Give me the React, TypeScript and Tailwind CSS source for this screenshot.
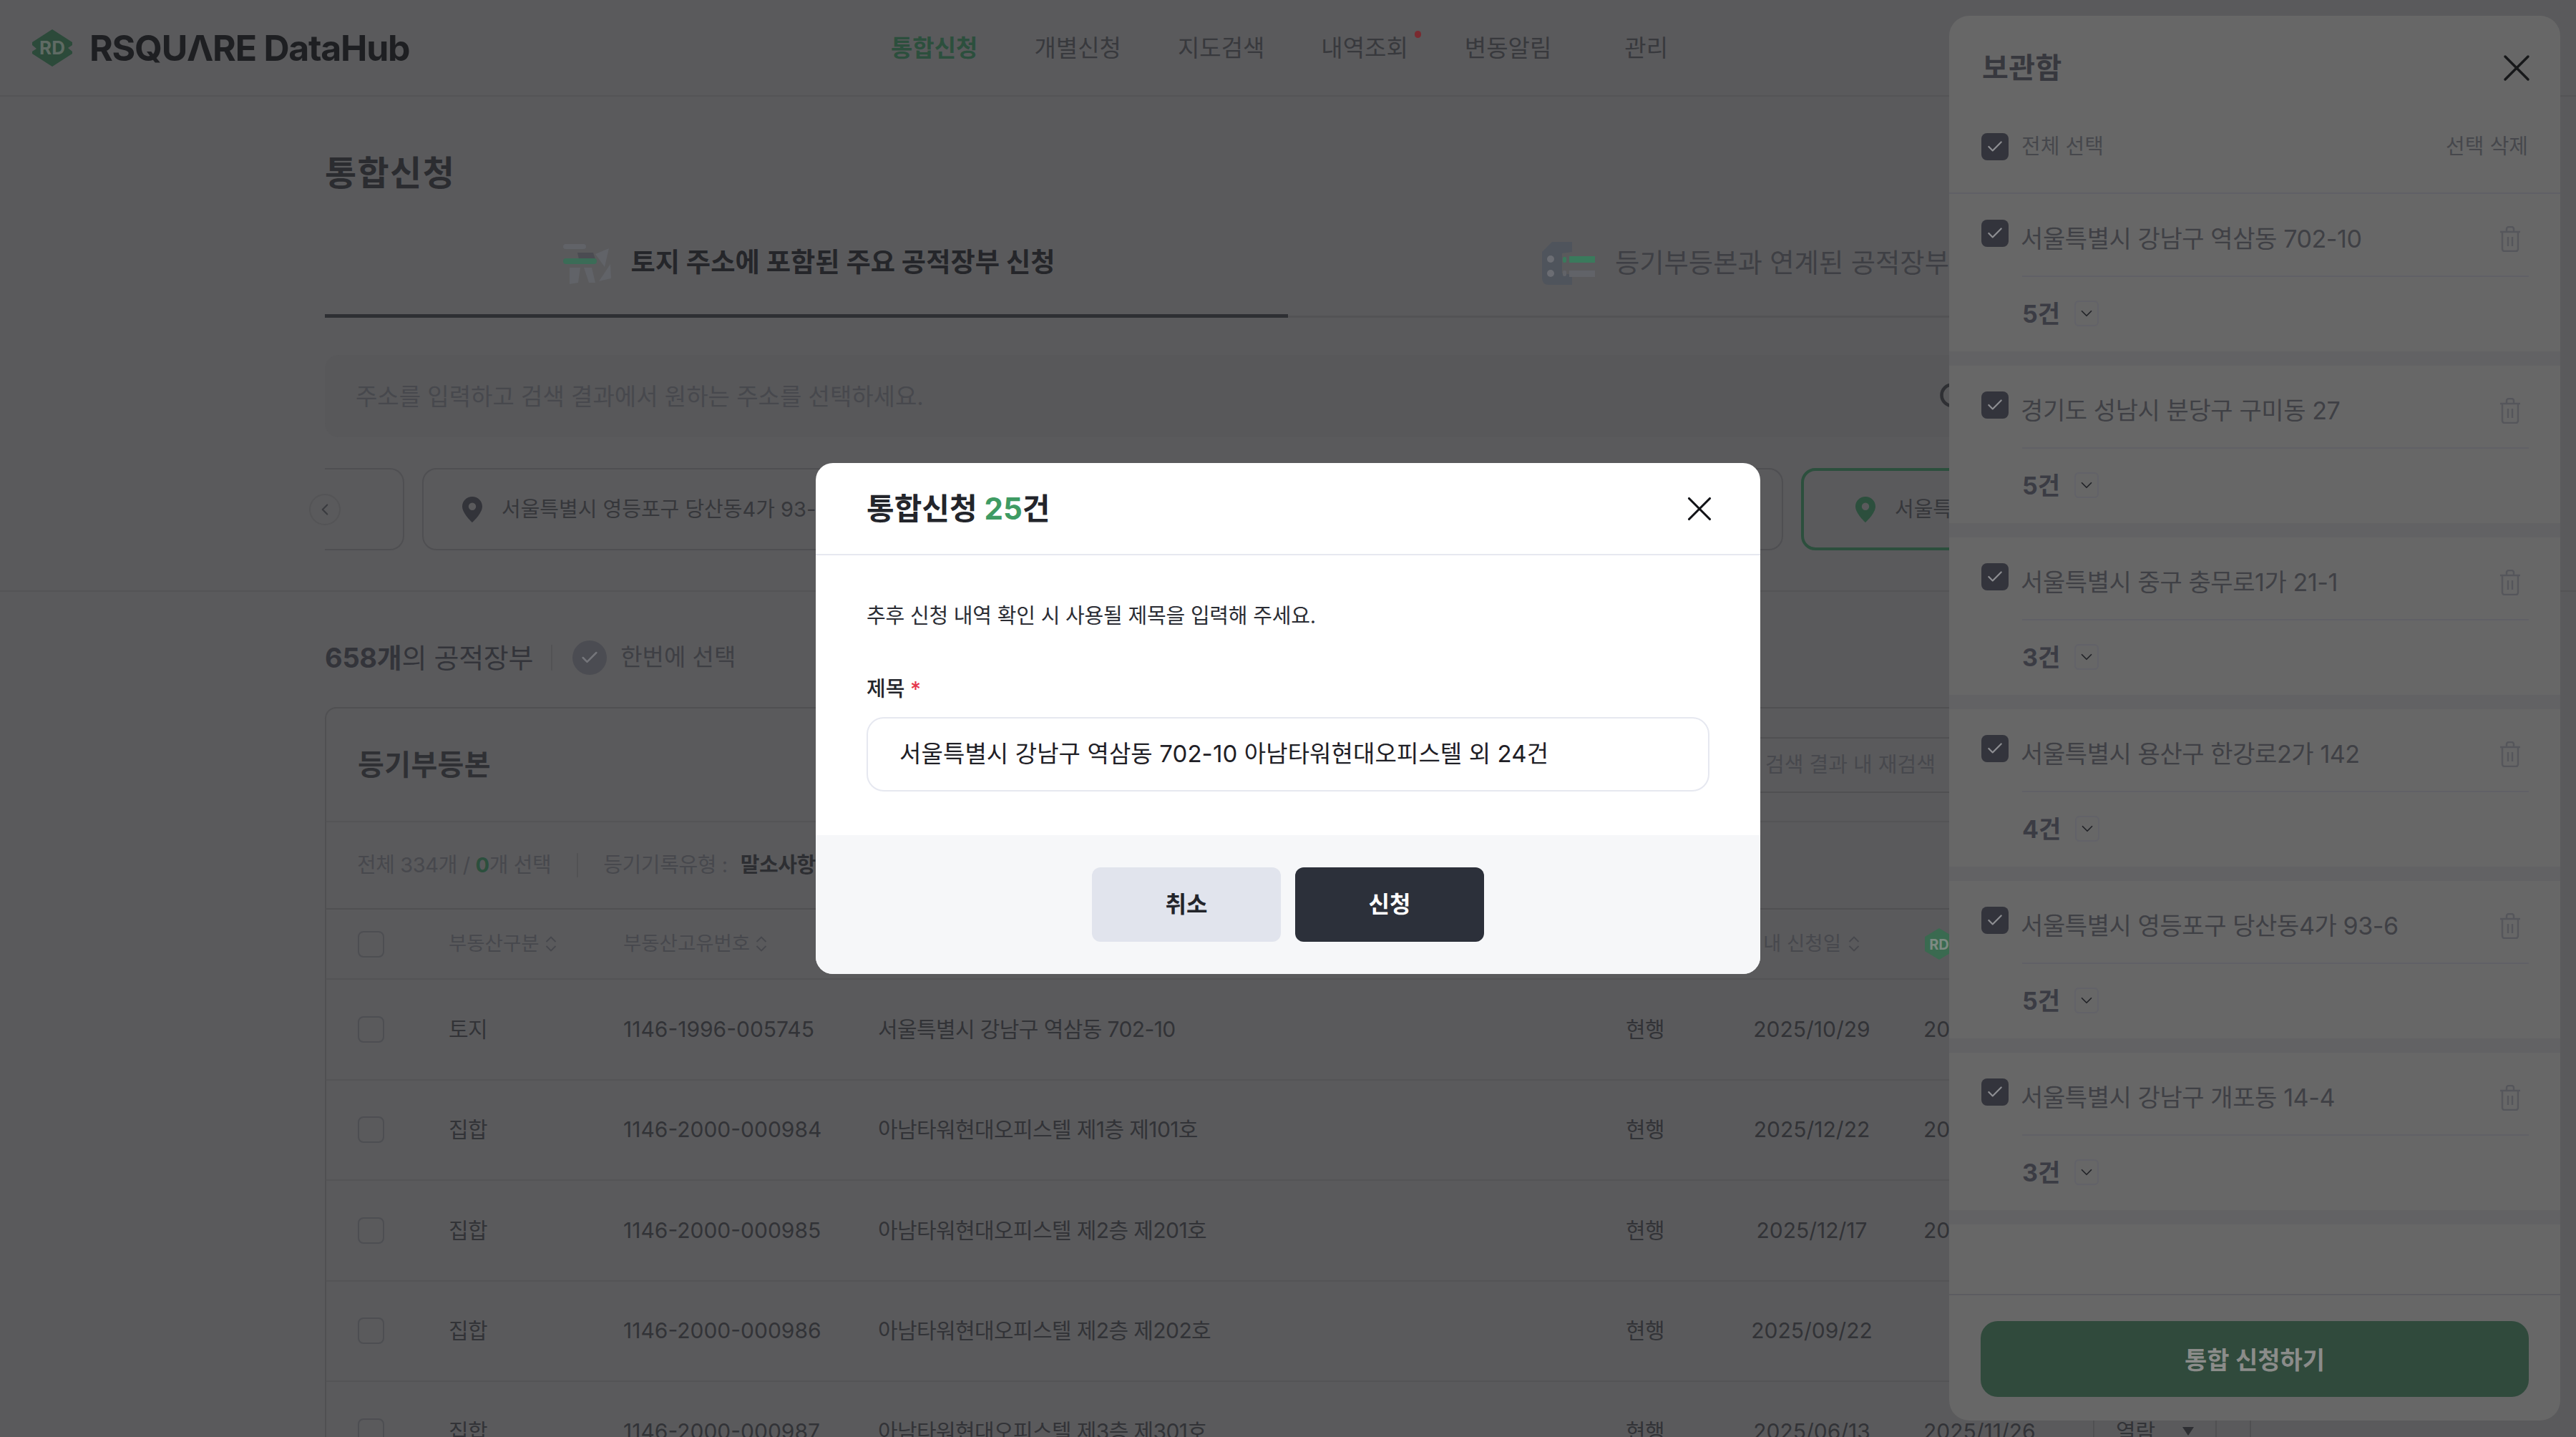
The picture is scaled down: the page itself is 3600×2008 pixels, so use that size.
import { Check, ChevronDown, ChevronLeft, Search, X } from "lucide-react";

function Logo() {
  return (
    <svg width="58" height="52" viewBox="0 0 58 52" className="shrink-0">
      <path d="M29 0 L57 18 L57 22 L51 26 L57 31 L57 34 L29 52 L1 34 L1 31 L7 27 L1 22 L1 18 Z" fill="#2c4a3a" />
      <text x="29" y="35" textAnchor="middle" fontSize="26" fontWeight="700" fill="#5f6b64" fontFamily="Inter">RD</text>
    </svg>
  );
}

function LandIcon() {
  return (
    <svg width="68" height="60" viewBox="0 0 68 60" className="shrink-0">
      <rect x="0" y="4" width="32" height="7" rx="3.5" fill="#616368" />
      <path d="M20 16 H42 L45 25 H22 Z" fill="#4b4c52" />
      <path d="M45 18 L64 10 L58 36 L50 25 Z" fill="#616368" />
      <rect x="0" y="24" width="47" height="8" rx="4" fill="#3b6c57" />
      <path d="M9 37 H24 L21 58 L9 60 Z" fill="#616368" />
      <path d="M29 37 H40 L45 58 L36 58 Z" fill="#616368" />
      <path d="M66 32 L67 52 L50 56 Z" fill="#616368" />
    </svg>
  );
}

function RegisterIcon() {
  return (
    <svg width="74" height="60" viewBox="0 0 74 60" className="shrink-0">
      <path d="M14 0 H42 V14 L28 16 V44 L42 46 V60 H10 Q0 60 0 50 V14 Z" fill="#4f545c" />
      <circle cx="12" cy="24" r="5" fill="#6b6d73" />
      <circle cx="12" cy="44" r="5" fill="#6b6d73" />
      <rect x="29" y="21" width="5" height="8" rx="2" fill="#3a7a5c" />
      <rect x="38" y="20" width="36" height="9" fill="#3a7a5c" />
      <rect x="29" y="40" width="5" height="8" rx="2" fill="#616368" />
      <rect x="38" y="40" width="36" height="9" fill="#616368" />
    </svg>
  );
}

function Pin({ color }: { color: string }) {
  return (
    <svg width="28" height="36" viewBox="0 0 28 36" className="shrink-0">
      <path d="M14 0C6.3 0 0 6.1 0 13.7 0 23.5 14 36 14 36s14-12.5 14-22.3C28 6.1 21.7 0 14 0Zm0 19a5.2 5.2 0 1 1 0-10.4A5.2 5.2 0 0 1 14 19Z" fill={color} />
    </svg>
  );
}

function Trash() {
  return (
    <svg width="30" height="36" viewBox="0 0 30 36" fill="none" stroke="#55565b" strokeWidth="2.4" className="shrink-0">
      <path d="M1 8H29M10 8V4a3 3 0 0 1 3-3h4a3 3 0 0 1 3 3v4M4 8v24a3 3 0 0 0 3 3h16a3 3 0 0 0 3-3V8M12 15v13M18 15v13" />
    </svg>
  );
}

function Sort() {
  return (
    <svg width="16" height="22" viewBox="0 0 16 22" fill="none" stroke="#47484d" strokeWidth="1.8" className="shrink-0">
      <path d="M1.5 8 8 1.5 14.5 8M1.5 14 8 20.5 14.5 14" />
    </svg>
  );
}

function Box() {
  return <span className="block w-[37px] h-[37px] rounded-lg border-2 border-[#4d4e52]" />;
}

function CheckedBox() {
  return (
    <span className="flex w-[38px] h-[38px] rounded-lg bg-[#33343c] items-center justify-center shrink-0">
      <Check size={26} strokeWidth={2} className="text-[#8d8e92]" />
    </span>
  );
}

const rows = [
  ["토지", "1146-1996-005745", "서울특별시 강남구 역삼동 702-10", "2025/10/29", "2025/11/26"],
  ["집합", "1146-2000-000984", "아남타워현대오피스텔 제1층 제101호", "2025/12/22", "2025/11/26"],
  ["집합", "1146-2000-000985", "아남타워현대오피스텔 제2층 제201호", "2025/12/17", "2025/11/26"],
  ["집합", "1146-2000-000986", "아남타워현대오피스텔 제2층 제202호", "2025/09/22", ""],
  ["집합", "1146-2000-000987", "아남타워현대오피스텔 제3층 제301호", "2025/06/13", "2025/11/26"],
];

const drawerItems = [
  ["서울특별시 강남구 역삼동 702-10", "5건"],
  ["경기도 성남시 분당구 구미동 27", "5건"],
  ["서울특별시 중구 충무로1가 21-1", "3건"],
  ["서울특별시 용산구 한강로2가 142", "4건"],
  ["서울특별시 영등포구 당산동4가 93-6", "5건"],
  ["서울특별시 강남구 개포동 14-4", "3건"],
];

const grid = "grid grid-cols-[171px_244px_356px_1045px_167px_186px_302px_171px_46px]";

export default function App() {
  return (
    <div className="relative w-[3600px] h-[2008px] overflow-hidden bg-[#5a5a5c] font-[Inter,'Noto_Sans_CJK_KR',sans-serif] text-[#38393d]">
      <header className="flex items-center h-[135px] border-b-2 border-[#545456] pl-[44px]">
        <Logo />
        <span className="ml-[23px] w-[446px] text-[50px] font-bold leading-none tracking-[-1.25px] text-[#1e1f22] whitespace-nowrap">RSQU&#923;RE DataHub</span>
        <nav className="ml-[674px] flex gap-[79px] text-[33px] leading-[44px] whitespace-nowrap">
          <a className="font-semibold text-[#2c4f3d]">통합신청</a>
          <a>개별신청</a>
          <a>지도검색</a>
          <a className="relative">내역조회<span className="absolute -right-[18px] top-[-2px] w-[9px] h-[10px] rounded-full bg-[#7a2a30]" /></a>
          <a>변동알림</a>
          <a className="ml-[23px]">관리</a>
        </nav>
      </header>

      <section className="border-b-2 border-[#545456] h-[692px] pt-[72px]">
        <div className="w-[2692px] mx-auto">
          <h1 className="h-[70px] text-[48px] leading-[70px] font-bold tracking-[1.4px] text-[#2b2c30]">통합신청</h1>
          <div className="mt-[15px] grid grid-cols-2 h-[152px]">
            <div className="flex items-center justify-center gap-[26px] border-b-[5px] border-[#2e2f33] pt-[2px] pl-[8px]">
              <LandIcon />
              <span className="text-[37.3px] font-bold text-[#25262a] whitespace-nowrap">토지 주소에 포함된 주요 공적장부 신청</span>
            </div>
            <div className="flex items-center justify-center gap-[28px] border-b-[3px] border-[#535355] pt-[2px] pl-[12px]">
              <RegisterIcon />
              <span className="text-[37.3px] text-[#3e3f44] whitespace-nowrap">등기부등본과 연계된 공적장부 신청</span>
            </div>
          </div>
          <div className="mt-[52px] h-[115px] rounded-[20px] bg-[#58585a] flex items-center justify-between pl-[43px] pr-[30px]">
            <span className="text-[33px] pt-[2px] text-[#47484d]">주소를 입력하고 검색 결과에서 원하는 주소를 선택하세요.</span>
            <Search size={44} strokeWidth={2.5} className="text-[#2f3034] mr-[364px]" />
          </div>
          <div className="relative mt-[43px] h-[115px] flex gap-[25px]">
            <div className="w-[111px] shrink-0 rounded-r-[20px] border-2 border-l-0 border-[#4f4f52]" />
            <div className="w-[920px] shrink-0 rounded-[20px] border-2 border-[#4f4f52] flex items-center pl-[54px] gap-[27px]">
              <Pin color="#33343a" />
              <span className="text-[29px] text-[#36373b] whitespace-nowrap">서울특별시 영등포구 당산동4가 93-6</span>
            </div>
            <div className="w-[957px] shrink-0 rounded-[20px] border-2 border-[#4f4f52]" />
            <div className="w-[600px] shrink-0 rounded-[20px] border-4 border-[#2c4f3d] flex items-center pl-[72px] gap-[27px]">
              <Pin color="#2c4f3d" />
              <span className="text-[29px] text-[#36373b] whitespace-nowrap">서울특별시 강남구</span>
            </div>
            <span className="absolute -left-[22px] top-[36px] w-[44px] h-[44px] rounded-full bg-[#5a5a5c] border-2 border-[#545456] flex items-center justify-center">
              <ChevronLeft size={26} className="text-[#3a3b3f]" />
            </span>
          </div>
        </div>
      </section>

      <main className="w-[2692px] mx-auto pt-[67px]">
        <div className="h-[50px] flex items-center whitespace-nowrap">
          <span className="text-[38px] tracking-[-0.3px] text-[#33343a]"><b className="font-bold">658개</b>의 공적장부</span>
          <span className="ml-[25px] w-[2px] h-[36px] bg-[#525254]" />
          <span className="ml-[28px] w-[48px] h-[48px] rounded-full bg-[#4b4c52] flex items-center justify-center">
            <Check size={28} strokeWidth={2.2} className="text-[#74757a]" />
          </span>
          <span className="ml-[19px] text-[33px] text-[#3e3f44]">한번에 선택</span>
        </div>

        <div className="mt-[44px] rounded-t-[16px] border-2 border-b-0 border-[#505052]">
          <div className="h-[159px] border-b-2 border-[#545456] flex items-center justify-between pl-[44px]">
            <h2 className="text-[40px] font-bold text-[#2f3034] tracking-[0.4px]">등기부등본</h2>
            <div className="w-[800px] h-[78px] border-y-2 border-l-2 rounded-xl border-[#505052] flex items-center pl-[141px] mr-[20px]">
              <span className="text-[29px] text-[#47484d] whitespace-nowrap">검색 결과 내 재검색</span>
            </div>
          </div>
          <div className="h-[122px] border-b-2 border-[#505052] flex items-center pl-[43px] text-[29px] tracking-[-0.4px] text-[#47484d] whitespace-nowrap">
            <span>전체 334개 / <b className="font-bold text-[#2c4f3d]">0</b>개 선택</span>
            <span className="ml-[36px] w-[2px] h-[34px] bg-[#525254]" />
            <span className="ml-[35px]">등기기록유형 :</span>
            <b className="ml-[18px] font-bold text-[#2d2e32]">말소사항 포함</b>
          </div>
          <div className={`${grid} h-[98px] items-center border-b-2 border-[#545456] text-[27.5px] text-[#47484d] whitespace-nowrap`}>
            <div className="pl-[44px]"><Box /></div>
            <div className="flex items-center gap-[8px]">부동산구분 <Sort /></div>
            <div className="flex items-center gap-[8px]">부동산고유번호 <Sort /></div>
            <div />
            <div />
            <div className="col-span-1 flex items-center gap-[10px] pl-[25px]">내 신청일 <Sort /></div>
            <div className="pl-[63px] flex items-center gap-[10px]">
              <svg width="44" height="44" viewBox="0 0 44 44"><path d="M22 0 42 12V32L22 44 2 32V12Z" fill="#3a6a50" /><text x="22" y="30" textAnchor="middle" fontSize="20" fontWeight="700" fill="#7d8a82" fontFamily="Inter">RD</text></svg>
            </div>
            <div />
            <div />
          </div>
          {rows.map((r, i) => (
            <div key={i} className={`${grid} h-[140.5px] items-center border-b-2 border-[#545456] text-[30px] text-[#323337] whitespace-nowrap`}>
              <div className="pl-[44px]"><Box /></div>
              <div className="tracking-[-0.6px]">{r[0]}</div>
              <div>{r[1]}</div>
              <div className="tracking-[-0.6px]">{r[2]}</div>
              <div className="tracking-[-0.6px]">현행</div>
              <div className="text-center">{r[3]}</div>
              <div className="pl-[63px] h-full flex items-center border-r-2 border-[#505052]">{r[4]}</div>
              <div className="pl-[30px] h-full flex items-center border-r-2 border-[#505052]">
                <span>열람</span>
                <svg width="16" height="12" viewBox="0 0 16 12" className="ml-[38px]"><path d="M0 0H16L8 12Z" fill="#2e2f33" /></svg>
              </div>
              <div />
            </div>
          ))}
        </div>
      </main>

      <aside className="absolute left-[2724px] top-[22px] w-[854px] h-[1963px] rounded-[28px] bg-[#676767] flex flex-col overflow-hidden">
        <div className="h-[249px] border-b-2 border-[#606066] px-[45px] shrink-0">
          <div className="flex items-center justify-between h-[146px]">
            <h2 className="text-[40px] font-bold text-[#37383e] tracking-[0.5px] ml-[1px]">보관함</h2>
            <X size={64} strokeWidth={1.3} className="text-[#17181a] -mr-[16px]" />
          </div>
          <div className="mt-[18px] flex items-center justify-between h-[38px] text-[29px] text-[#46474c]">
            <div className="flex items-center gap-[18px]"><CheckedBox /><span>전체 선택</span></div>
            <span>선택 삭제</span>
          </div>
        </div>
        <div className="flex-1">
          {drawerItems.map(([name, count], i) => (
            <div key={i} className="h-[240px] border-b-[20px] border-[#626264]">
              <div className="pt-[36px] pl-[45px] pr-[44px] flex gap-[19px]">
                <CheckedBox />
                <div className="flex-1">
                  <div className="flex items-start justify-between h-[80px] border-b-2 border-[#606066] text-[34px] tracking-[-0.4px] text-[#3f4045] whitespace-nowrap">
                    <span className="leading-[54px] -ml-[2px]">{name}</span>
                    <span className="mt-[9px] mr-[11px]"><Trash /></span>
                  </div>
                  <div className="flex items-center h-[102px] gap-[20px]">
                    <b className="text-[34px] font-bold text-[#3b3c44]">{count}</b>
                    <span className="w-[34px] h-[36px] rounded-md border-2 border-[#626268] flex items-center justify-center">
                      <ChevronDown size={26} strokeWidth={1.6} className="text-[#222328]" />
                    </span>
                  </div>
                </div>
              </div>
            </div>
          ))}
        </div>
        <div className="h-[177px] border-t-2 border-[#5c5c60] px-[44px] pt-[36px] shrink-0">
          <button className="w-full h-[106px] rounded-[24px] bg-[#304a3c] text-[34px] pt-[2px] font-semibold text-[#8b8c8a]">통합 신청하기</button>
        </div>
      </aside>

      <div className="absolute inset-0 flex items-center justify-center">
        <div className="w-[1320px] h-[714px] rounded-[24px] overflow-hidden bg-white flex flex-col text-[#1f2026]">
          <div className="h-[129px] border-b-2 border-[#e6e8f0] flex items-center justify-between pl-[71px] pr-[56px] shrink-0">
            <h2 className="text-[42px] font-bold text-[#23252b]">통합신청 <span className="text-[#3f9b63]">25</span>건</h2>
            <X size={58} strokeWidth={1.3} className="text-[#111216]" />
          </div>
          <div className="flex-1 px-[71px]">
            <p className="mt-[63px] text-[29px] tracking-[-0.2px] leading-[44px] text-[#2b2d34]">추후 신청 내역 확인 시 사용될 제목을 입력해 주세요.</p>
            <label className="mt-[58px] block text-[29px] leading-[44px] font-medium text-[#23252b]">제목 <span className="text-[#e5364d]">*</span></label>
            <div className="mt-[17px] h-[104px] rounded-[24px] border-2 border-[#e6e8f0] flex items-center pl-[44px] text-[33px] tracking-[0.1px] text-[#1f2026]">
              서울특별시 강남구 역삼동 702-10 아남타워현대오피스텔 외 24건
            </div>
          </div>
          <div className="h-[194px] bg-[#f6f7f9] flex items-start justify-center gap-[20px] pt-[45px] shrink-0">
            <button className="w-[264px] h-[104px] rounded-[12px] bg-[#e1e4ed] text-[32px] font-bold text-[#23252b]">취소</button>
            <button className="w-[264px] h-[104px] rounded-[12px] bg-[#2c303a] text-[32px] font-bold text-white">신청</button>
          </div>
        </div>
      </div>
    </div>
  );
}
